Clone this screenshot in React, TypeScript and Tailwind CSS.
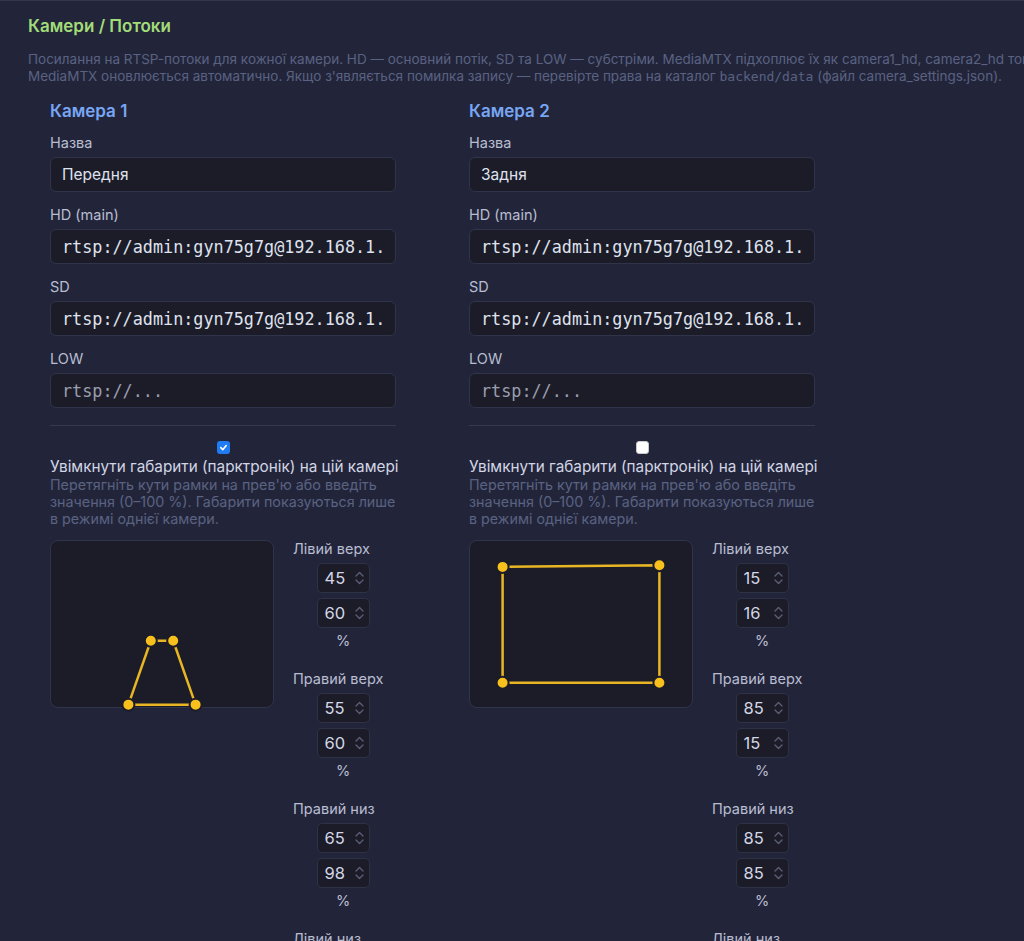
import React from "react";

type Pt = [number, number];

const W = 224;
const H = 168;

function Preview({ pts }: { pts: Pt[] }) {
  const p = pts.map(([x, y]) => [(x / 100) * W, (y / 100) * H] as Pt);
  const poly = p.map((q) => q.join(",")).join(" ");
  return (
    <div className="w-[224px] h-[168px] shrink-0 rounded-[8px] border border-[#30344a] bg-[#1c1c28]">
      <svg width={W} height={H} viewBox={`0 0 ${W} ${H}`} className="overflow-visible -m-px">
        <polygon points={poly} fill="none" stroke="#e8b624" strokeWidth={2.5} />
        {p.map((q, i) => (
          <circle key={i} cx={q[0]} cy={q[1]} r={6} fill="#f7c01d" stroke="#1c1c28" strokeWidth={2} />
        ))}
      </svg>
    </div>
  );
}

function NumBox({ v }: { v: number }) {
  return (
    <div className="w-[53px] h-[30px] rounded-[5px] border border-[#2e3246] bg-[#1c1c28] flex items-center pl-[7px] pr-[5px]">
      <span className="text-[16.5px] text-[#d3d6e6] flex-1 leading-none">{v}</span>
      <svg width="9" height="16" viewBox="0 0 9 16" className="text-[#5a6075]">
        <path d="M1 6 L4.5 2.5 L8 6" fill="none" stroke="currentColor" strokeWidth="1.3" strokeLinecap="round" strokeLinejoin="round" />
        <path d="M1 10 L4.5 13.5 L8 10" fill="none" stroke="currentColor" strokeWidth="1.3" strokeLinecap="round" strokeLinejoin="round" />
      </svg>
    </div>
  );
}

function Corner({ label, a, b }: { label: string; a: number; b: number }) {
  return (
    <div className="flex flex-col items-center mb-[20px]">
      <div className="self-start text-[14.5px] leading-[18px] text-[#b9bdd1] whitespace-nowrap">{label}</div>
      <div className="mt-[5px]"><NumBox v={a} /></div>
      <div className="mt-[5px]"><NumBox v={b} /></div>
      <div className="mt-[4px] text-[14.5px] leading-[18px] text-[#b9bdd1]">%</div>
    </div>
  );
}

function Field({ label, value, placeholder, first }: { label: string; value?: string; placeholder?: string; first?: boolean }) {
  const mono = label !== "Назва";
  return (
    <div className={first ? "mt-[10px]" : "mt-[13px]"}>
      <div className="text-[14.5px] leading-[20px] text-[#b9bdd1]">{label}</div>
      <input
        readOnly
        defaultValue={value}
        placeholder={placeholder}
        className={
          "mt-[4px] block w-full h-[35px] rounded-[6px] border border-[#30344a] bg-[#1c1c28] px-[11px] outline-none text-[#dfe2ee] placeholder:text-[#9a9eae] " +
          (mono ? "text-[16.8px] font-['DejaVu_Sans_Mono',monospace]" : "text-[15.5px]")
        }
      />
    </div>
  );
}

function Camera({
  n,
  name,
  hd,
  sd,
  checked,
  corners,
}: {
  n: number;
  name: string;
  hd: string;
  sd: string;
  checked: boolean;
  corners: Pt[];
}) {
  const labels = ["Лівий верх", "Правий верх", "Правий низ", "Лівий низ"];
  return (
    <div className="w-[346px]">
      <div className="text-[17px] leading-[24px] font-semibold text-[#78a6f5]">Камера {n}</div>
      <Field label="Назва" value={name} first />
      <Field label="HD (main)" value={hd} />
      <Field label="SD" value={sd} />
      <Field label="LOW" placeholder="rtsp://..." />
      <div className="mt-[17px] h-px bg-[#363a50]" />
      <div className="flex justify-center mt-[15px]">
        {checked ? (
          <span className="w-[13px] h-[13px] rounded-[3px] bg-[#1f7cf4] flex items-center justify-center">
            <svg width="9" height="9" viewBox="0 0 10 10">
              <path d="M2 5.2 L4.2 7.4 L8 2.8" fill="none" stroke="white" strokeWidth="1.8" strokeLinecap="round" strokeLinejoin="round" />
            </svg>
          </span>
        ) : (
          <span className="w-[13px] h-[13px] rounded-[3px] bg-white border border-[#c9c9c9]" />
        )}
      </div>
      <div className="mt-[4px] text-[15.3px] leading-[18px] text-[#d2d5e4] whitespace-nowrap">
        Увімкнути габарити (парктронік) на цій камері
      </div>
      <div className="text-[14.3px] leading-[17px] text-[#5a6281]">
        Перетягніть кути рамки на прев'ю або введіть значення (0–100 %). Габарити показуються лише в режимі однієї камери.
      </div>
      <div className="mt-[13px] flex gap-[19px] items-start">
        <Preview pts={corners} />
        <div className="w-[100px]">
          {corners.map((c, i) => (
            <Corner key={i} label={labels[i]} a={c[0]} b={c[1]} />
          ))}
        </div>
      </div>
    </div>
  );
}

export default function App() {
  return (
    <div className="w-[1024px] h-[941px] overflow-hidden bg-[#22253a] border-t border-[#33374c] font-['Inter',sans-serif]">
      <div className="pl-[28px] pt-[13px]">
        <h2 className="text-[17px] leading-[24px] font-semibold text-[#a2dc78]">Камери / Потоки</h2>
        <p className="mt-[13px] text-[13.5px] leading-[17px] text-[#5a6282] whitespace-nowrap">
          Посилання на RTSP-потоки для кожної камери. HD — основний потік, SD та LOW — субстріми. MediaMTX підхоплює їх як camera1_hd, camera2_hd тощо.
          <br />
          MediaMTX оновлюється автоматично. Якщо з'являється помилка запису — перевірте права на каталог{" "}
          <span className="font-['DejaVu_Sans_Mono',monospace] text-[13px]">backend/data</span> (файл camera_settings.json).
        </p>
        <div className="mt-[14px] pl-[22px] flex gap-[73px]">
          <Camera
            n={1}
            name="Передня"
            hd="rtsp://admin:gyn75g7g@192.168.1.50:554/h264Preview_01_main"
            sd="rtsp://admin:gyn75g7g@192.168.1.50:554/h264Preview_01_sub"
            checked
            corners={[
              [45, 60],
              [55, 60],
              [65, 98],
              [35, 98],
            ]}
          />
          <Camera
            n={2}
            name="Задня"
            hd="rtsp://admin:gyn75g7g@192.168.1.51:554/h264Preview_01_main"
            sd="rtsp://admin:gyn75g7g@192.168.1.51:554/h264Preview_01_sub"
            checked={false}
            corners={[
              [15, 16],
              [85, 15],
              [85, 85],
              [15, 85],
            ]}
          />
        </div>
      </div>
    </div>
  );
}
